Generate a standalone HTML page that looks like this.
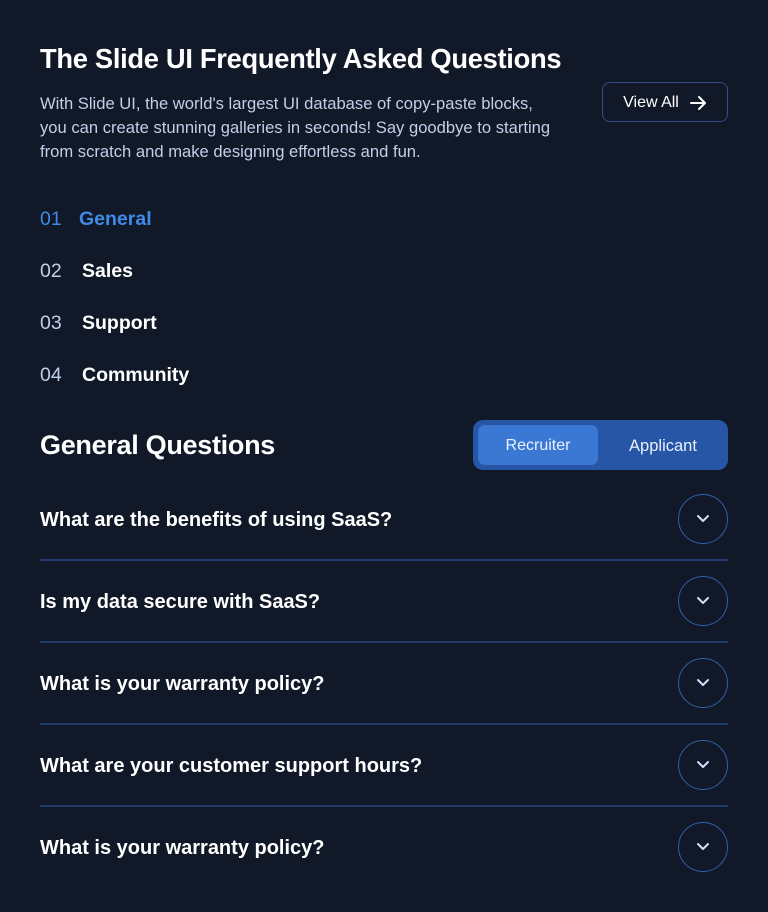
<!DOCTYPE html>
<html><head><style>
*{margin:0;padding:0;box-sizing:border-box}
body{width:768px;height:912px;background:#111827;font-family:"Liberation Sans",sans-serif;color:#fff;position:relative;overflow:hidden}
.abs{position:absolute}
h1{position:absolute;left:40px;top:43px;font-size:27.3px;font-weight:700;letter-spacing:-0.3px}
.p{left:40px;top:92px;width:560px;font-size:16.6px;line-height:24px;color:#bfd0ea}
.btn{left:602px;top:82px;width:126px;height:40px;border:1px solid #2f4f85;border-radius:8px;font-size:16px;display:flex;align-items:center;justify-content:center;gap:10px;padding-top:1px}
.nav{left:40px;font-size:19.5px;font-weight:700;display:flex;align-items:center;height:30px}
.nav .n{font-weight:400;color:#bfd0ea;width:42px}
.h2{left:40px;top:430px;font-size:27px;font-weight:700;letter-spacing:-0.3px}
.tog{left:473px;top:420px;width:255px;height:50px;background:#2656a5;border-radius:10px}
.rec{position:absolute;left:5px;top:5px;width:120px;height:40px;background:#3a78d4;border-radius:7px;font-size:16px;display:flex;align-items:center;justify-content:center;color:#e8f0ff;padding-top:2px}
.app{position:absolute;left:130px;top:5px;width:120px;height:40px;font-size:16.5px;display:flex;align-items:center;justify-content:center;color:#e8f0ff;padding-top:2px}
.q{left:40px;width:688px;height:82px;display:flex;align-items:center;justify-content:space-between;font-size:20px;font-weight:700}
.q span{padding-top:2px}
.c{width:50px;height:50px;border:1px solid #2f5fa8;border-radius:50%;display:flex;align-items:center;justify-content:center}
.d{left:40px;width:688px;height:2px;background:#1f3a6a}
</style></head><body>
<h1>The Slide UI Frequently Asked Questions</h1>
<div class="abs p">With Slide UI, the world's largest UI database of copy-paste blocks,<br>you can create stunning galleries in seconds! Say goodbye to starting<br>from scratch and make designing effortless and fun.</div>
<div class="abs btn">View All <svg width="18" height="16" viewBox="0 0 18 16"><path d="M2 8H16M10 2L16 8L10 14" stroke="#fff" stroke-width="2" fill="none" stroke-linecap="round" stroke-linejoin="round"/></svg></div>
<div class="abs nav" style="top:204px;color:#3f8ae6"><span class="n" style="color:#3f8ae6;width:39px">01</span>General</div>
<div class="abs nav" style="top:256px"><span class="n">02</span>Sales</div>
<div class="abs nav" style="top:308px"><span class="n">03</span>Support</div>
<div class="abs nav" style="top:360px"><span class="n">04</span>Community</div>
<div class="abs h2">General Questions</div>
<div class="abs tog"><div class="rec">Recruiter</div><div class="app">Applicant</div></div>
<div class="abs q" style="top:478px"><span>What are the benefits of using SaaS?</span><div class="c"><svg width="16" height="10" viewBox="0 0 16 10"><path d="M3 2L8 7L13 2" stroke="#cfe0ff" stroke-width="2" fill="none" stroke-linecap="round" stroke-linejoin="round"/></svg></div></div>
<div class="abs d" style="top:559px"></div>
<div class="abs q" style="top:560px"><span>Is my data secure with SaaS?</span><div class="c"><svg width="16" height="10" viewBox="0 0 16 10"><path d="M3 2L8 7L13 2" stroke="#cfe0ff" stroke-width="2" fill="none" stroke-linecap="round" stroke-linejoin="round"/></svg></div></div>
<div class="abs d" style="top:641px"></div>
<div class="abs q" style="top:642px"><span>What is your warranty policy?</span><div class="c"><svg width="16" height="10" viewBox="0 0 16 10"><path d="M3 2L8 7L13 2" stroke="#cfe0ff" stroke-width="2" fill="none" stroke-linecap="round" stroke-linejoin="round"/></svg></div></div>
<div class="abs d" style="top:723px"></div>
<div class="abs q" style="top:724px"><span>What are your customer support hours?</span><div class="c"><svg width="16" height="10" viewBox="0 0 16 10"><path d="M3 2L8 7L13 2" stroke="#cfe0ff" stroke-width="2" fill="none" stroke-linecap="round" stroke-linejoin="round"/></svg></div></div>
<div class="abs d" style="top:805px"></div>
<div class="abs q" style="top:806px"><span>What is your warranty policy?</span><div class="c"><svg width="16" height="10" viewBox="0 0 16 10"><path d="M3 2L8 7L13 2" stroke="#cfe0ff" stroke-width="2" fill="none" stroke-linecap="round" stroke-linejoin="round"/></svg></div></div>
</body></html>
